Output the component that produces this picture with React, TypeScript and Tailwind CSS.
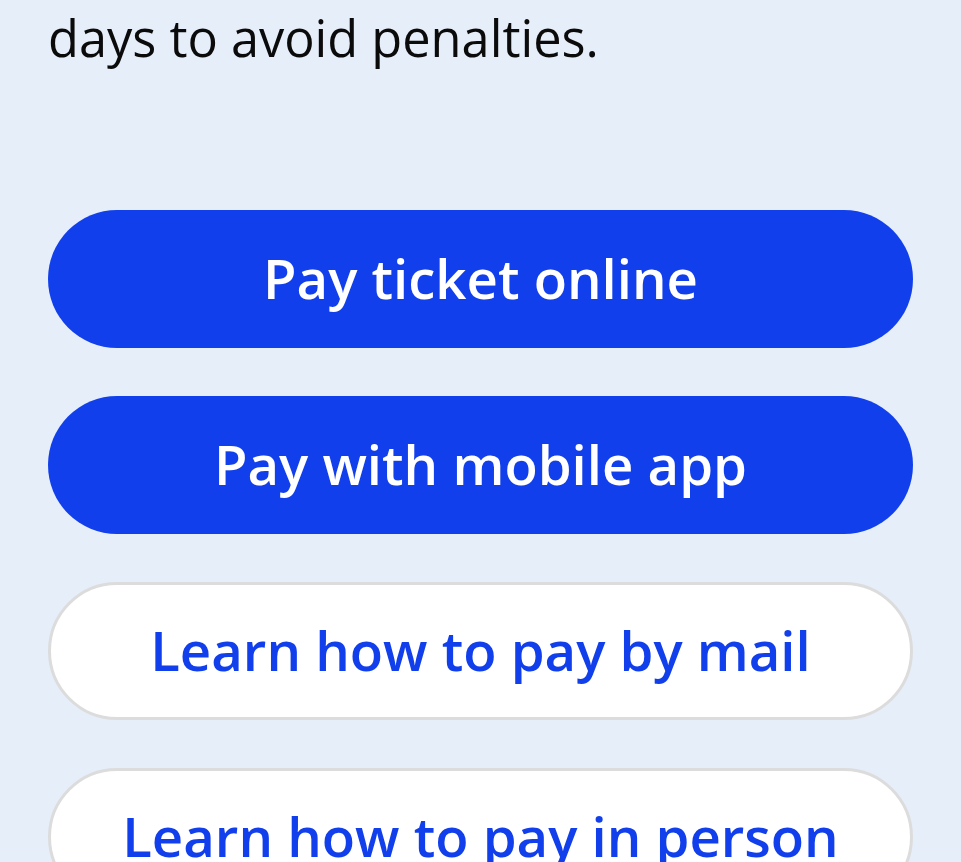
const actions = [
  { label: "Pay ticket online", primary: true },
  { label: "Pay with mobile app", primary: true },
  { label: "Learn how to pay by mail", primary: false },
  { label: "Learn how to pay in person", primary: false },
];

export default function App() {
  return (
    <div
      className="min-h-screen overflow-hidden bg-[#e6eef9] px-12"
      style={{ fontFamily: '"Open Sans", "Noto Sans", sans-serif' }}
    >
      <p className="pt-[5px] text-[50.5px] leading-[66px] text-[#0b0b0b]">
        days to avoid penalties.
      </p>

      <div className="mt-[139px] flex flex-col gap-12">
        {actions.map((action) =>
          action.primary ? (
            <button
              key={action.label}
              className="flex h-[138px] w-full items-center justify-center rounded-full bg-[#113fec] text-[54.5px] font-semibold text-white"
            >
              {action.label}
            </button>
          ) : (
            <button
              key={action.label}
              className="flex h-[138px] w-full items-center justify-center rounded-full border-[3px] border-[#dcdcdc] bg-white text-[54.5px] font-semibold text-[#113fec]"
            >
              {action.label}
            </button>
          ),
        )}
      </div>
    </div>
  );
}
